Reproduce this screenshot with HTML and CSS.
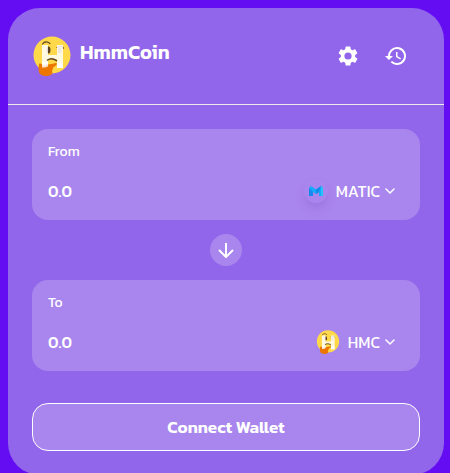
FILE: index.html
```html
<!DOCTYPE html>
<html lang="en">
<head>
<meta charset="utf-8">
<meta name="viewport" content="width=device-width, initial-scale=1">
<title>HmmCoin</title>
<link rel="stylesheet" href="styles.css">
</head>
<body>
<svg class="defs" aria-hidden="true">
  <symbol id="coin" viewBox="0 0 40 40">
    <circle cx="20" cy="19" r="18.500" fill="#ffd94a"/>
    <ellipse cx="16.500" cy="14" rx="2" ry="3.500" fill="#5c4022"/>
    <ellipse cx="27.500" cy="14.500" rx="2" ry="3" fill="#8a7454"/>
    <path d="M10.500 8c2-2.500 5-2.300 7.500-.5M25 11.500c2.500-1.500 5-1.300 6.500.6" fill="none" stroke="#5c4022" stroke-width="1.200" stroke-linecap="round"/>
    <path d="M10 9h6v10h9V9h6v23h-6v-9h-9v9h-6z" fill="#fff" opacity=".84"/>
    <path d="M15.500 24c2.500-1.800 6-1.600 9 .6" fill="none" stroke="#5c4022" stroke-width="1.500" stroke-linecap="round"/>
    <path d="M7 28c1.500-1 3 0 4.500 1.500 3-1.500 8-1 12.500-2.500 1.600.4.800 2.500-1.500 3.500-2 .8-1.500 3-2.500 4.500 1.500 3-1.500 5-6 5-5.500 0-7.500-3-7.500-7z" fill="#ed7600"/>
    <path d="M10 26h6v4.500l-3 1H10zM25 27h6v5h-6z" fill="#fff" opacity=".8"/>
  </symbol>
  <symbol id="chevron" viewBox="0 0 11 7">
    <path d="M1 1l4 4 4-4" fill="none" stroke="currentColor" stroke-width="1.500" stroke-linecap="round" stroke-linejoin="round"/>
  </symbol>
</svg>
<main class="card">
  <header class="header">
    <svg class="logo" aria-hidden="true"><use href="#coin"/></svg>
    <h1 class="title">HmmCoin</h1>
    <div class="actions">
      <button class="icon-button" type="button" aria-label="Settings">
        <svg viewBox="0 0 24 24"><path fill="currentColor" d="M19.140 12.940c.04-.3.060-.61.060-.94s-.02-.64-.07-.94l2.030-1.580a.49.490 0 0 0 .12-.61l-1.920-3.320a.49.490 0 0 0-.59-.22l-2.390.96a7 7 0 0 0-1.620-.94l-.36-2.540A.48.480 0 0 0 13.920 2.400h-3.840a.48.480 0 0 0-.48.410l-.36 2.540a7.300 7.300 0 0 0-1.620.94l-2.390-.96a.48.480 0 0 0-.59.220L2.740 8.870a.48.480 0 0 0 .12.610l2.030 1.580a6 6 0 0 0 0 1.880l-2.030 1.580a.49.490 0 0 0-.12.610l1.920 3.320c.12.220.37.290.59.220l2.390-.96c.5.380 1.030.7 1.620.94l.36 2.540c.5.240.24.410.48.410h3.840c.24 0 .44-.17.470-.41l.36-2.540a7 7 0 0 0 1.620-.94l2.390.96c.22.080.47 0 .59-.22l1.920-3.320a.48.480 0 0 0-.12-.61zM12 15.600a3.600 3.600 0 1 1 0-7.200 3.600 3.600 0 0 1 0 7.200z"/></svg>
      </button>
      <button class="icon-button" type="button" aria-label="History">
        <svg viewBox="0 0 24 24"><path fill="currentColor" d="M13 3a9 9 0 0 0-9 9H1l3.890 3.890.070.140L9 12H6a7 7 0 1 1 2.060 4.940l-1.420 1.420A9 9 0 1 0 13 3zm-1 5v5l4.280 2.540.72-1.210-3.500-2.080V8z"/></svg>
      </button>
    </div>
  </header>
  <form class="swap">
    <section class="panel">
      <label class="label" for="from">From</label>
      <div class="row">
        <input class="amount" id="from" type="text" inputmode="decimal" placeholder="0.0">
        <button class="token" type="button">
          <span class="matic">
            <svg viewBox="0 0 16 12" aria-hidden="true"><path d="M1 3l2-2 5 3.500L13 1l2 2v8h-4V7L8 9 5 7v4H1z" fill="#16a9fb"/><path d="M1 3v8h4V7zM8 4.500L13 1l-2 6-3 2z" fill="#1688ee"/><path d="M13 1l2 2v8h-2z" fill="#27c3fb"/></svg>
          </span>
          <span class="symbol">MATIC</span>
          <svg class="chevron" aria-hidden="true"><use href="#chevron"/></svg>
        </button>
      </div>
    </section>
    <button class="flip" type="button" aria-label="Switch tokens">
      <svg viewBox="0 0 16 16"><path d="M8 1v14M1 8l7 7 7-7" fill="none" stroke="currentColor" stroke-width="2"/></svg>
    </button>
    <section class="panel">
      <label class="label" for="to">To</label>
      <div class="row">
        <input class="amount" id="to" type="text" inputmode="decimal" placeholder="0.0">
        <button class="token" type="button">
          <svg class="coin" aria-hidden="true"><use href="#coin"/></svg>
          <span class="symbol">HMC</span>
          <svg class="chevron" aria-hidden="true"><use href="#chevron"/></svg>
        </button>
      </div>
    </section>
    <button class="connect" type="button">Connect Wallet</button>
  </form>
</main>
</body>
</html>
```
FILE: styles.css
```css
* {
  box-sizing: border-box;
}

html {
  background: #640df3;
  scrollbar-width: none;
}

body {
  margin: 0;
  padding: 8px 6px 0 8px;
  color: #fff;
  font-family: Kanit, "Noto Sans", sans-serif;
  font-size: 16px;
  line-height: 24px;
}

button,
input {
  padding: 0;
  border: 0;
  background: none;
  color: inherit;
  font: inherit;
}

svg {
  display: block;
}

.defs {
  position: absolute;
  width: 0;
  height: 0;
}

.card {
  border-radius: 32px;
  background: #9266ea;
}

.header {
  display: flex;
  align-items: center;
  height: 97px;
  padding: 0 36px 0 24px;
  border-bottom: 1px solid #efe9ec;
}

.logo {
  width: 40px;
  height: 40px;
}

.title {
  margin: 0 0 8px 8px;
  font-size: 20px;
  font-weight: 600;
  line-height: 24px;
}

.actions {
  display: flex;
  gap: 24px;
  margin-left: auto;
}

.icon-button svg {
  width: 24px;
  height: 24px;
}

.swap {
  display: flex;
  flex-direction: column;
  padding: 24px;
}

.panel {
  height: 91px;
  padding: 13px 24px 16px 16px;
  border-radius: 16px;
  background: #a986ed;
}

.label {
  display: block;
  font-size: 14px;
  line-height: 20px;
}

.row {
  display: flex;
  align-items: center;
  margin-top: 17px;
}

.amount {
  flex: 1;
  min-width: 0;
  height: 24px;
  font-weight: 500;
}

.amount::placeholder {
  color: #fff;
  opacity: 1;
}

.token {
  display: flex;
  align-items: center;
}

.symbol {
  margin: 0 5px 0 8px;
}

.matic {
  display: grid;
  place-items: center;
  width: 24px;
  height: 24px;
  border-radius: 50%;
  background: #a986ed;
  box-shadow: 0 6px 10px #64289e26;
}

.matic svg {
  width: 16px;
  height: 12px;
}

.coin {
  width: 24px;
  height: 24px;
}

.chevron {
  width: 11px;
  height: 7px;
}

.flip {
  display: grid;
  place-items: center;
  align-self: center;
  width: 32px;
  height: 32px;
  margin: 14px 0;
  border-radius: 50%;
  background: #a986ed;
}

.flip svg {
  width: 16px;
  height: 16px;
}

.connect {
  height: 48px;
  margin-top: 32px;
  border: 1px solid #fff;
  border-radius: 16px;
  background: #a986ed;
  font-size: 17px;
  font-weight: 600;
}
```
